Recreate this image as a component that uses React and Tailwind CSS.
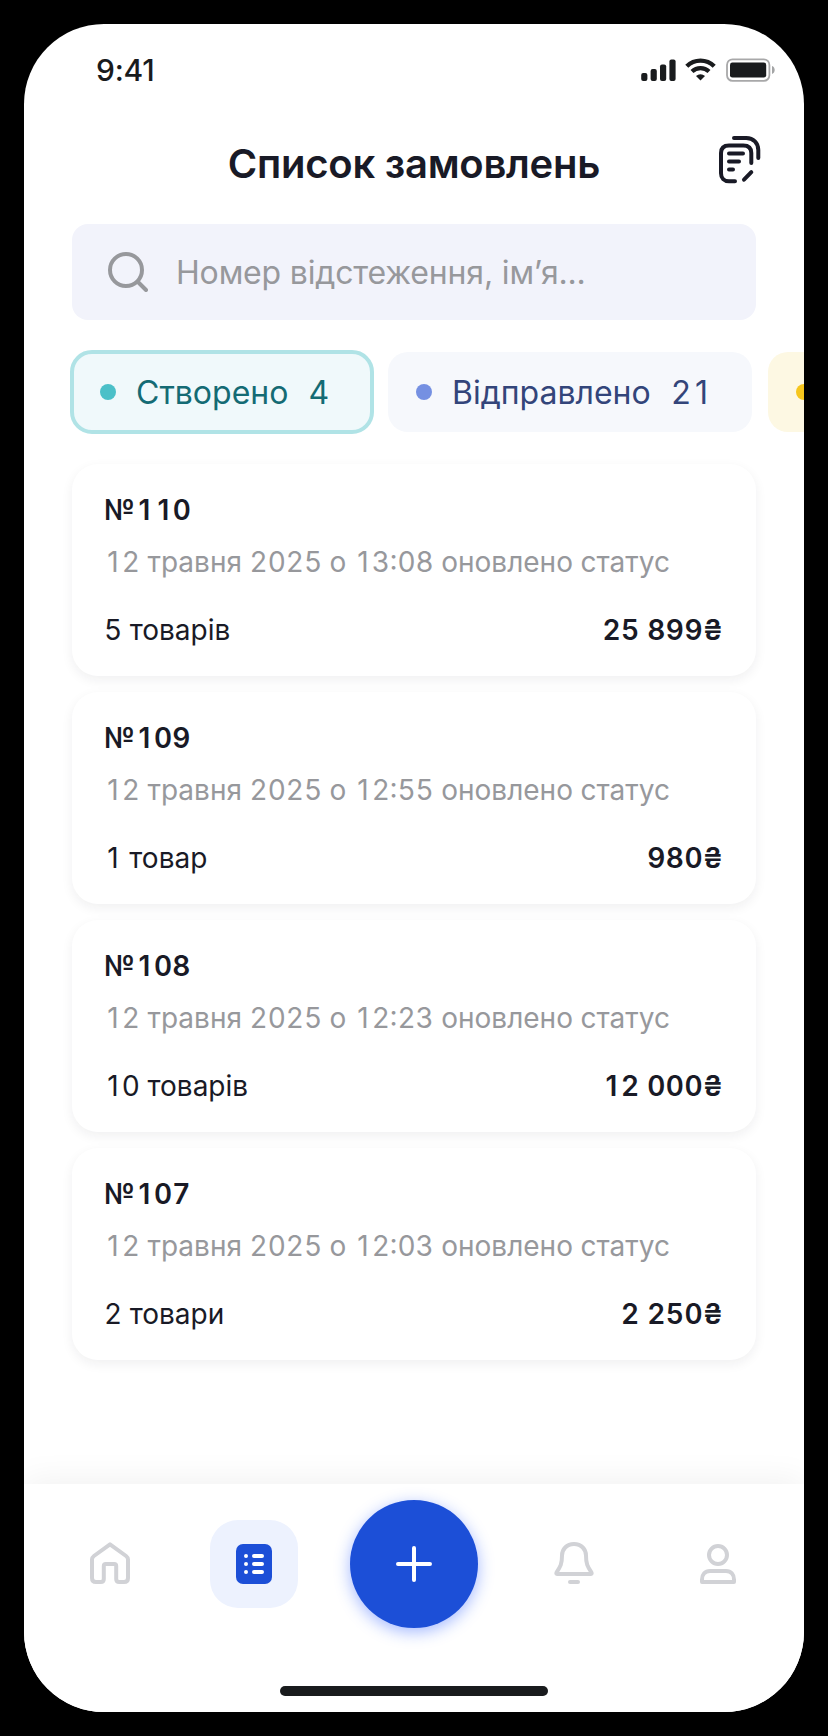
const FONT = "font-['Inter','Liberation_Sans',sans-serif]";

const orders = [
  { id: "110", time: "13:08", items: "5 товарів", price: "25 899₴" },
  { id: "109", time: "12:55", items: "1 товар", price: "980₴" },
  { id: "108", time: "12:23", items: "10 товарів", price: "12 000₴" },
  { id: "107", time: "12:03", items: "2 товари", price: "2 250₴" },
];

/* Tabular digits, with the plain (footless) form of the digit one. */
function Digits({ children, bold = false }) {
  const width = bold ? "w-[0.675em]" : "w-[0.635em]";
  return (
    <span className="tabular-nums">
      {children.split(/(1)/).map((part, i) =>
        part === "1" ? (
          <span key={i} className={`inline-block text-center normal-nums tracking-normal ${width}`}>
            1
          </span>
        ) : (
          part
        ),
      )}
    </span>
  );
}

function StatusBar() {
  return (
    <div className="flex h-[92px] items-center justify-between pr-[28px] pl-[72px] text-[#191b1d]">
      <span className="text-[30px] leading-9 font-[550] tracking-[-0.2px]">9:41</span>
      <div className="flex items-center">
        <svg width="36" height="24" viewBox="0 0 36 24" fill="currentColor" className="mr-[8px]">
          <rect x="0.2" y="15" width="6.2" height="8" rx="2" />
          <rect x="9.6" y="11" width="6.2" height="12" rx="2" />
          <rect x="19" y="6.4" width="6.2" height="16.6" rx="2" />
          <rect x="28.4" y="1.4" width="6.2" height="21.6" rx="2" />
        </svg>
        <svg width="31" height="24" viewBox="0 0 31 24" fill="none" stroke="currentColor" className="mr-[10px]">
          <path d="M1.8 8.2a19.600 19.600 0 0 1 27.400 0" strokeWidth="4.400" />
          <path d="M7 13.6a12.2 12.2 0 0 1 17 0" strokeWidth="4.2" />
          <path d="M15.5 22.600 11 18.1a6.600 6.600 0 0 1 9 0z" fill="currentColor" stroke="none" />
        </svg>
        <svg width="50" height="24" viewBox="0 0 50 24" fill="none">
          <rect x="1" y="1.3" width="42.4" height="21.6" rx="5.6" stroke="#191b1d" strokeOpacity="0.38" strokeWidth="1.8" />
          <rect x="4" y="4.6" width="36.2" height="15" rx="2.4" fill="#191b1d" />
          <path d="M46 8v8c1.700-.6 2.700-2.200 2.700-4s-1-3.400-2.700-4z" fill="#191b1d" fillOpacity="0.4" />
        </svg>
      </div>
    </div>
  );
}

function NotesIcon() {
  return (
    <svg width="42" height="48" viewBox="0 0 42 48" fill="none" stroke="#191a26" strokeWidth="4" strokeLinecap="round" strokeLinejoin="round">
      <path d="M15 2h12.300c7 0 12 5 12 12v8" />
      <path d="M32.300 27V17c0-5-3-7.600-8-7.600H10c-5 0-8 2.600-8 7.600v20.300c0 5 3 8 8 8h6" />
      <path d="M10 17.400h14M10 25.400h10M10 33.400h4" />
      <path d="M25 43.700l7.300-7.500" />
    </svg>
  );
}

function Chip({ dot, className, label, count }) {
  return (
    <div className={`flex h-20 shrink-0 items-center rounded-[20px] pl-7 text-[32px] ${className}`}>
      <span className={`mr-5 size-4 shrink-0 rounded-full ${dot}`} />
      <span className="pt-0.5 leading-10 whitespace-nowrap">{label}</span>
      <span className="ml-5 pt-0.5 leading-10">
        <Digits>{count}</Digits>
      </span>
    </div>
  );
}

function OrderCard({ order }) {
  return (
    <article className="flex h-[212px] flex-col rounded-[26px] bg-white pt-7 pr-[33px] pl-8 text-[28px] leading-9 text-[#191a26] shadow-[0_4px_12px_rgba(25,26,38,0.065)]">
      <h2 className="font-semibold tracking-[0.3px]">
        №<Digits bold>{order.id}</Digits>
      </h2>
      <p className="mt-4 whitespace-nowrap text-[#97989c]">
        <Digits>{`12 травня 2025 о ${order.time} оновлено статус`}</Digits>
      </p>
      <div className="mt-8 flex justify-between">
        <span>
          <Digits>{order.items}</Digits>
        </span>
        <span className="font-semibold tracking-[0.4px]">
          <Digits bold>{order.price}</Digits>
        </span>
      </div>
    </article>
  );
}

function BottomNav() {
  return (
    <nav className="flex h-[228px] flex-col items-center bg-white shadow-[0_-4px_32px_rgba(0,0,0,0.06)]">
      <div className="flex h-40 w-full items-center pl-[66px]">
        <svg width="40" height="44" viewBox="0 0 40 44" fill="none" stroke="#d1d2d6" strokeWidth="4" strokeLinejoin="round">
          <path d="M20 2.400 3.900 14Q2 15.400 2 17.600V36q0 4 4 4h4.800q3 0 3-3V24q0-2 2-2h8.400q2 0 2 2v13q0 3 3 3H34q4 0 4-4V17.600q0-2.200-1.900-3.600z" />
        </svg>
        <div className="ml-20 flex size-22 items-center justify-center rounded-[28px] bg-[#edf2fe]">
          <svg width="36" height="40" viewBox="0 0 36 40">
            <rect width="36" height="40" rx="7" fill="#1c4fd7" />
            <g stroke="#fff" strokeWidth="4" strokeLinecap="round">
              <path d="M10 12h0M10 20h0M10 28h0M18 12h8M18 20h8M18 28h8" />
            </g>
          </svg>
        </div>
        <button className="ml-[52px] flex size-32 items-center justify-center rounded-full bg-[#1c4fd7] shadow-[0_4px_16px_rgba(28,79,255,0.4)]">
          <svg width="36" height="36" viewBox="0 0 36 36" stroke="#fff" strokeWidth="4" strokeLinecap="round">
            <path d="M18 2v32M2 18h32" />
          </svg>
        </button>
        <svg width="40" height="44" viewBox="0 0 40 44" fill="none" stroke="#d1d2d6" strokeWidth="4" strokeLinecap="round" strokeLinejoin="round" className="ml-[76px]">
          <path d="M20 2C12.500 2 8 7.500 8 13.500 8 22 6.500 24.500 2.600 30.400Q1.800 32 3.600 32h32.800q1.800 0 1-1.600C33.500 24.500 32 22 32 13.500 32 7.500 27.500 2 20 2z" />
          <path d="M16 40h8" />
        </svg>
        <svg width="36" height="40" viewBox="0 0 36 40" fill="none" stroke="#d1d2d6" strokeWidth="4" strokeLinejoin="round" className="ml-[106px]">
          <circle cx="18" cy="11" r="9" />
          <path d="M2 38v-2.500c0-5 3-8.500 8-8.500h16c5 0 8 3.500 8 8.500V38z" />
        </svg>
      </div>
      <div className="mt-[42px] h-[10px] w-[268px] rounded-full bg-[#191b1d]" />
    </nav>
  );
}

export default function App() {
  return (
    <div className={`h-[1736px] w-[828px] bg-black p-6 ${FONT}`}>
      <main className="flex h-full flex-col overflow-hidden rounded-[80px] bg-white">
        <StatusBar />
        <header className="flex h-[108px] items-start pl-12">
          <h1 className="-mr-[37px] w-[684px] shrink-0 pt-6 text-center text-[40px] leading-[48px] font-semibold tracking-[-0.25px] text-[#191a26]">
            Список замовлень
          </h1>
          <div className="pt-5">
            <NotesIcon />
          </div>
        </header>
        <div className="mx-12 flex h-24 shrink-0 items-center rounded-2xl bg-[#f2f3fb] pl-9">
          <svg width="40" height="40" viewBox="0 0 40 40" fill="none" stroke="#97989c" strokeWidth="4" strokeLinecap="round">
            <circle cx="18" cy="18" r="16" />
            <path d="M30 30l8 8" />
          </svg>
          <span className="ml-7 pt-0.5 text-[32px] leading-10 tracking-[-0.17px] text-[#97989c]">
            Номер відстеження, ім’я...
          </span>
        </div>
        <div className="mt-8 flex shrink-0 gap-4 pl-12">
          <Chip
            className="w-[300px] bg-[#f0f9fb] text-[#146b74] outline-4 -outline-offset-2 outline-[#b0e3e6]"
            dot="bg-[#4bc0c8]"
            label="Створено"
            count="4"
          />
          <Chip className="w-[364px] bg-[#f6f8fc] text-[#33457a]" dot="bg-[#7590e2]" label="Відправлено" count="21" />
          <Chip className="w-[300px] bg-[#fdf8e3] text-[#7a5c12]" dot="bg-[#f6c61d]" label="" count="" />
        </div>
        <section className="mt-8 flex grow flex-col gap-4 px-12">
          {orders.map((order) => (
            <OrderCard key={order.id} order={order} />
          ))}
        </section>
        <BottomNav />
      </main>
    </div>
  );
}
